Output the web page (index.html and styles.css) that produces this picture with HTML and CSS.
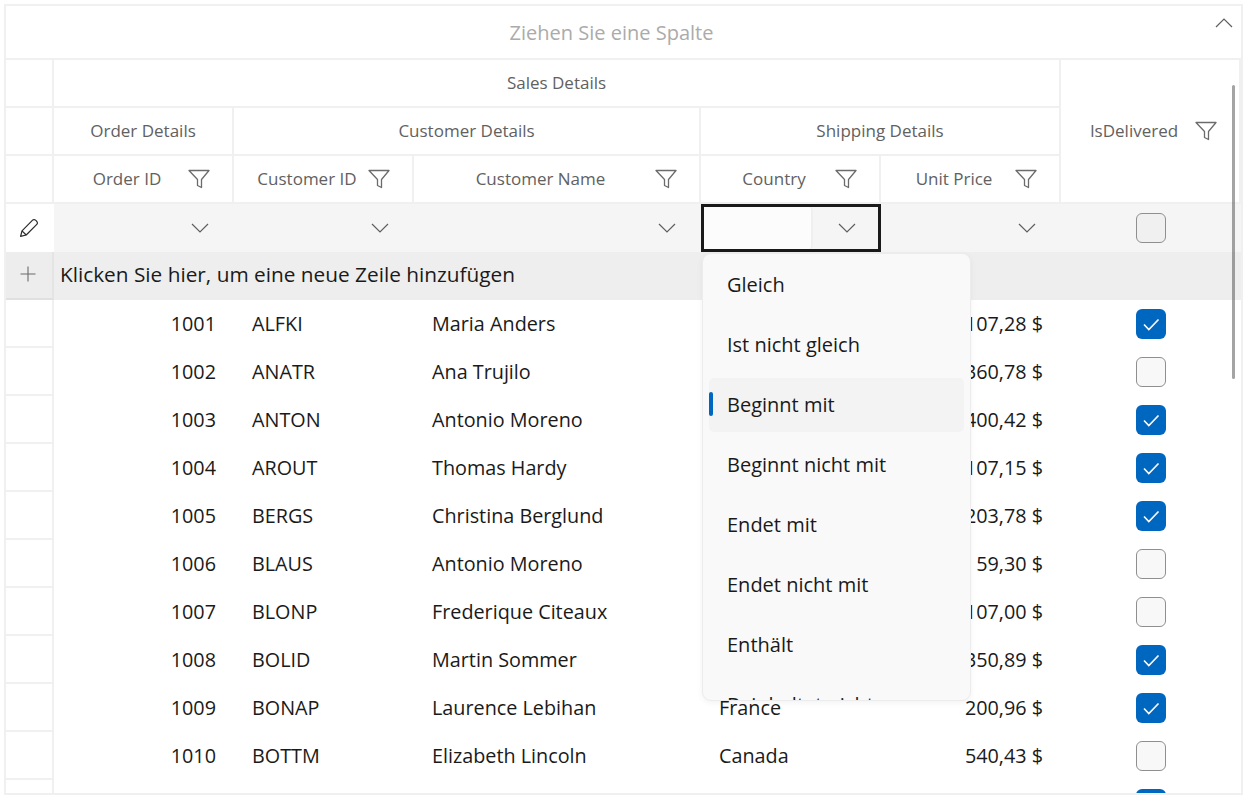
FILE: index.html
```html
<!DOCTYPE html>
<html lang="de">

<head>
    <meta charset="UTF-8">
    <meta name="viewport" content="width=device-width, initial-scale=1.0">
    <title>Sales Details</title>
    <link rel="stylesheet" href="styles.css">
</head>

<body>
    <svg class="defs" width="0" height="0">
        <symbol id="funnel" viewBox="0 0 22 20">
            <path d="M1 1.5H21L13.5 10.5V18.5L9.5 16.5V10.5Z" fill="none" stroke="currentColor" stroke-width="1.3" stroke-linejoin="round" />
        </symbol>
        <symbol id="chevron" viewBox="0 0 18 10">
            <path d="M1 1L9 9L17 1" fill="none" stroke="currentColor" stroke-width="1.2" />
        </symbol>
        <symbol id="check" viewBox="0 0 30 30">
            <path d="M8 15.5L12.8 20.5L22.5 10.5" fill="none" stroke="#ffffff" stroke-width="1.6" />
        </symbol>
    </svg>

    <div class="grid">
        <div class="group-panel">
            <span>Ziehen Sie eine Spalte</span>
            <svg class="collapse" width="18" height="10"><use href="#chevron" /></svg>
        </div>

        <div class="head">
            <div class="cell stub s-row1"></div>
            <div class="cell band s-sales">Sales Details</div>
            <div class="cell title s-delivered">
                <span class="label">IsDelivered</span>
                <svg class="funnel"><use href="#funnel" /></svg>
            </div>

            <div class="cell stub"></div>
            <div class="cell band">Order Details</div>
            <div class="cell band s-customer">Customer Details</div>
            <div class="cell band s-shipping">Shipping Details</div>

            <div class="cell stub"></div>
            <div class="cell title"><span class="label">Order ID</span><svg class="funnel"><use href="#funnel" /></svg></div>
            <div class="cell title"><span class="label">Customer ID</span><svg class="funnel"><use href="#funnel" /></svg></div>
            <div class="cell title"><span class="label">Customer Name</span><svg class="funnel"><use href="#funnel" /></svg></div>
            <div class="cell title"><span class="label">Country</span><svg class="funnel"><use href="#funnel" /></svg></div>
            <div class="cell title"><span class="label">Unit Price</span><svg class="funnel"><use href="#funnel" /></svg></div>
        </div>

        <div class="row filter-row">
            <div class="cell stub edit">
                <svg width="18" height="18" viewBox="0 0 18 18">
                    <path d="M0.6 17.4L2 11.8L12.6 1.2C13.5 0.3 15 0.4 16.2 1.7C17.6 3 17.7 4.5 16.8 5.4L6.2 16Z" fill="none" stroke="#2b2b2b" stroke-width="1.2" stroke-linejoin="round" />
                    <path d="M2 11.8L6.2 16" fill="none" stroke="#2b2b2b" stroke-width="1.2" />
                </svg>
            </div>
            <div class="cell drop"><svg class="chev"><use href="#chevron" /></svg></div>
            <div class="cell drop"><svg class="chev"><use href="#chevron" /></svg></div>
            <div class="cell drop"><svg class="chev"><use href="#chevron" /></svg></div>
            <div class="cell active-filter">
                <div class="filter-input"></div>
                <div class="filter-btn"><svg class="chev"><use href="#chevron" /></svg></div>
            </div>
            <div class="cell drop"><svg class="chev"><use href="#chevron" /></svg></div>
            <div class="cell center"><span class="box"></span></div>
        </div>

        <div class="add-row">
            <div class="cell stub add-stub">
                <svg width="16" height="16" viewBox="0 0 16 16">
                    <path d="M8 0.5V15.5M0.5 8H15.5" fill="none" stroke="#6b6b6b" stroke-width="1.1" />
                </svg>
            </div>
            <div class="add-text">Klicken Sie hier, um eine neue Zeile hinzufügen</div>
        </div>

        <div class="rows">
            <div class="row"><div class="cell stub"></div><div class="cell num">1001</div><div class="cell">ALFKI</div><div class="cell">Maria Anders</div><div class="cell"></div><div class="cell num">107,28 $</div><div class="cell center"><span class="box on"><svg><use href="#check" /></svg></span></div></div>
            <div class="row"><div class="cell stub"></div><div class="cell num">1002</div><div class="cell">ANATR</div><div class="cell">Ana Trujilo</div><div class="cell"></div><div class="cell num">360,78 $</div><div class="cell center"><span class="box"></span></div></div>
            <div class="row"><div class="cell stub"></div><div class="cell num">1003</div><div class="cell">ANTON</div><div class="cell">Antonio Moreno</div><div class="cell"></div><div class="cell num">400,42 $</div><div class="cell center"><span class="box on"><svg><use href="#check" /></svg></span></div></div>
            <div class="row"><div class="cell stub"></div><div class="cell num">1004</div><div class="cell">AROUT</div><div class="cell">Thomas Hardy</div><div class="cell"></div><div class="cell num">107,15 $</div><div class="cell center"><span class="box on"><svg><use href="#check" /></svg></span></div></div>
            <div class="row"><div class="cell stub"></div><div class="cell num">1005</div><div class="cell">BERGS</div><div class="cell">Christina Berglund</div><div class="cell"></div><div class="cell num">203,78 $</div><div class="cell center"><span class="box on"><svg><use href="#check" /></svg></span></div></div>
            <div class="row"><div class="cell stub"></div><div class="cell num">1006</div><div class="cell">BLAUS</div><div class="cell">Antonio Moreno</div><div class="cell"></div><div class="cell num">59,30 $</div><div class="cell center"><span class="box"></span></div></div>
            <div class="row"><div class="cell stub"></div><div class="cell num">1007</div><div class="cell">BLONP</div><div class="cell">Frederique Citeaux</div><div class="cell"></div><div class="cell num">107,00 $</div><div class="cell center"><span class="box"></span></div></div>
            <div class="row"><div class="cell stub"></div><div class="cell num">1008</div><div class="cell">BOLID</div><div class="cell">Martin Sommer</div><div class="cell"></div><div class="cell num">350,89 $</div><div class="cell center"><span class="box on"><svg><use href="#check" /></svg></span></div></div>
            <div class="row"><div class="cell stub"></div><div class="cell num">1009</div><div class="cell">BONAP</div><div class="cell">Laurence Lebihan</div><div class="cell">France</div><div class="cell num">200,96 $</div><div class="cell center"><span class="box on"><svg><use href="#check" /></svg></span></div></div>
            <div class="row"><div class="cell stub"></div><div class="cell num">1010</div><div class="cell">BOTTM</div><div class="cell">Elizabeth Lincoln</div><div class="cell">Canada</div><div class="cell num">540,43 $</div><div class="cell center"><span class="box"></span></div></div>
            <div class="row"><div class="cell stub"></div><div class="cell num"></div><div class="cell"></div><div class="cell"></div><div class="cell"></div><div class="cell num"></div><div class="cell center"><span class="box on"></span></div></div>
        </div>

        <div class="scrollbar"></div>

        <div class="menu">
            <div class="menu-item">Gleich</div>
            <div class="menu-item">Ist nicht gleich</div>
            <div class="menu-item selected">Beginnt mit</div>
            <div class="menu-item">Beginnt nicht mit</div>
            <div class="menu-item">Endet mit</div>
            <div class="menu-item">Endet nicht mit</div>
            <div class="menu-item">Enthält</div>
            <div class="menu-item">Beinhaltet nicht</div>
        </div>
    </div>
</body>

</html>
```

FILE: styles.css
```css
* {
    box-sizing: border-box;
}

body {
    margin: 4px;
    font-family: "Open Sans", "Noto Sans", sans-serif;
    color: #1a1a1a;
    background-color: #ffffff;
}

.defs {
    display: block;
    height: 0;
}

.grid {
    position: relative;
    width: 1239px;
    height: 791px;
    border: 2px solid #f0f0f0;
    overflow: hidden;
    font-size: 19.8px;
}

.group-panel {
    position: relative;
    display: flex;
    justify-content: center;
    align-items: center;
    height: 54px;
    padding-right: 24px;
    border-bottom: 2px solid #f0f0f0;
    font-size: 20px;
    color: #ababab;
}

.collapse {
    position: absolute;
    top: 12px;
    right: 8px;
    transform: rotate(180deg);
    color: #5f5f5f;
}

.head,
.row,
.add-row {
    display: grid;
    grid-template-columns: 48px 180px 180px 287px 180px 180px 180px;
    grid-auto-rows: 48px;
}

.cell {
    display: flex;
    align-items: center;
    padding: 0 18px 2px;
    min-width: 0;
    white-space: nowrap;
}

.stub {
    padding: 0;
    border-right: 2px solid #f0f0f0;
    border-bottom: 2px solid #f0f0f0;
}

.s-sales {
    grid-column: 2 / 7;
}

.s-delivered {
    grid-column: 7;
    grid-row: 1 / 4;
}

.s-customer {
    grid-column: 3 / 5;
}

.s-shipping {
    grid-column: 5 / 7;
}

.band,
.title {
    border-right: 2px solid #f0f0f0;
    border-bottom: 2px solid #f0f0f0;
    font-size: 17px;
    color: #616161;
}

.band {
    justify-content: center;
    padding: 0 0 2px;
}

.title {
    padding: 0 22px 0 12px;
}

.label {
    flex: 1;
    padding-bottom: 2px;
    text-align: center;
}

.funnel {
    flex: none;
    width: 22px;
    height: 20px;
    color: #6b6b6b;
}

.filter-row {
    background-color: #f5f5f5;
}

.edit {
    justify-content: center;
    padding-right: 2px;
    background-color: #ffffff;
    border: 0;
}

.drop {
    padding: 0 25px 0 0;
    justify-content: flex-end;
}

.chev {
    width: 18px;
    height: 10px;
    color: #5f5f5f;
}

.active-filter {
    padding: 0;
    border: 3px solid #1a1a1a;
    height: 48px;
}

.filter-input {
    flex: none;
    width: 109px;
    height: 100%;
    background-color: #fcfcfc;
    border-right: 2px solid #efefef;
    border-radius: 0 4px 4px 0;
}

.filter-btn {
    flex: 1;
    display: flex;
    justify-content: center;
    align-items: center;
    padding-left: 3px;
}

.add-row {
    background-color: #eeeeee;
}

.add-stub {
    justify-content: center;
    padding: 0 2px 2px 0;
    background-color: #ededed;
    border-right-color: #e4e4e4;
    border-bottom-color: #e0e0e0;
}

.add-text {
    grid-column: 2 / 8;
    display: flex;
    align-items: center;
    padding: 0 0 4px 6px;
    font-size: 20.8px;
}

.num {
    justify-content: flex-end;
}

.center {
    justify-content: center;
    padding: 0;
}

.box {
    display: block;
    width: 30px;
    height: 30px;
    border: 1.5px solid #8f8f8f;
    border-radius: 6px;
    background-color: #f8f8f8;
}

.filter-row .box {
    background-color: #f0f0f0;
}

.box.on {
    border: 0;
    background-color: #0067c0;
}

.box svg {
    display: block;
    width: 30px;
    height: 30px;
}

.scrollbar {
    position: absolute;
    top: 79px;
    right: 6px;
    width: 3px;
    height: 294px;
    border-radius: 2px;
    background-color: rgba(90, 90, 90, 0.55);
}

.menu {
    position: absolute;
    top: 247px;
    left: 696px;
    width: 269px;
    height: 448px;
    padding: 4px 6px 0;
    overflow: hidden;
    font-size: 20px;
    background-color: #f9f9f9;
    border: 1px solid #ececec;
    border-radius: 9px;
    box-shadow: 0 2px 6px rgba(0, 0, 0, 0.05);
}

.menu-item {
    position: relative;
    display: flex;
    align-items: center;
    height: 54px;
    margin-bottom: 6px;
    padding: 0 0 2px 18px;
    border-radius: 5px;
}

.selected {
    background-color: #f3f3f3;
}

.selected::before {
    content: "";
    position: absolute;
    left: 0;
    top: 14px;
    width: 4px;
    height: 24px;
    border-radius: 2px;
    background-color: #0067c0;
}
```
